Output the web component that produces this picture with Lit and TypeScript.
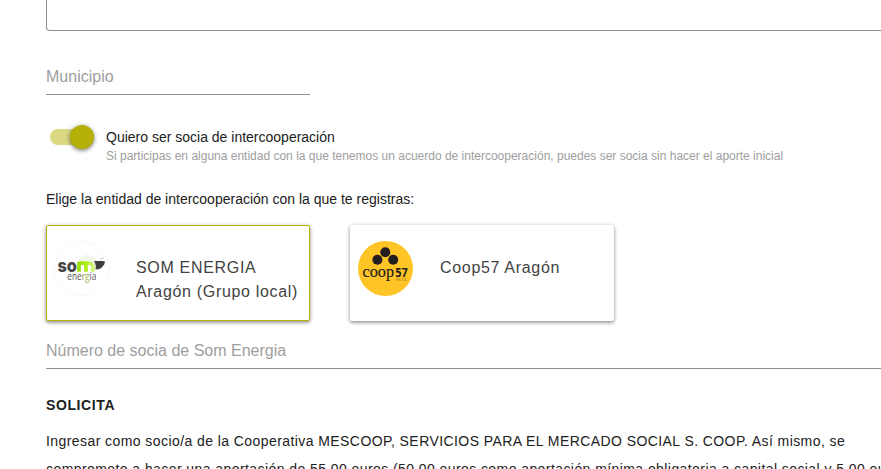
import { LitElement, html, css, svg } from "lit";
import { customElement, property } from "lit/decorators.js";

const somLogo = svg`
  <svg viewBox="0 0 55 55" width="55" height="55">
    <circle cx="27.5" cy="27.5" r="27" fill="#fff" stroke="#f8f8f8" stroke-width="1"/>
    <defs>
      <linearGradient id="lime" gradientUnits="userSpaceOnUse" x1="23" y1="0" x2="42" y2="0">
        <stop offset="0" stop-color="#96dc00"/><stop offset=".5" stop-color="#b0ee20"/><stop offset="1" stop-color="#dcf79a"/>
      </linearGradient>
    </defs>
    <text class="som" x="3.5" y="30.6" textLength="19.5" lengthAdjust="spacingAndGlyphs" fill="#454545">so</text>
    <path d="M25 30.800v-10M25.500 22.200h10q3.500 0 3.500 3v5.600M32 22v8.800" fill="none" stroke="url(#lime)" stroke-width="3.800"/>
    <path d="M24 20c3-5.500 10-8 15-4.500 2.500 1.500 3.500 3 4 5l-2 5c-2-4-5-5.500-9-5.500z" fill="#eff2e4" opacity=".85"/>
    <path d="M40 20h6c3 0 5 .2 5 1.200s-1 1.500-1.500 1.500c1.300.3 1 1.600-.3 1.900-1 2.700-3.800 4-7.700 4q1-5-1.500-8.600z" fill="#3d3d3d"/>
    <path d="M46 19.200c.5-3 2.500-.5 4-3" fill="none" stroke="#aaa" stroke-width=".7"/>
    <text class="energia" x="13.300" y="38.500" textLength="29" lengthAdjust="spacingAndGlyphs" fill="#555">ene<tspan fill="#8a9a50">r</tspan><tspan fill="#9bb84a">g</tspan>ia</text>
  </svg>`;

const coopLogo = svg`
  <svg viewBox="0 0 55 55" width="55" height="55">
    <circle cx="27.500" cy="27.500" r="27.500" fill="#ffc425"/>
    <g fill="#231f20">
      <circle cx="27.300" cy="11.300" r="5"/>
      <circle cx="19.400" cy="18.700" r="5"/>
      <circle cx="35.200" cy="18.700" r="5"/>
      <text class="coop" x="4.500" y="36" textLength="31.500" lengthAdjust="spacingAndGlyphs">coop</text>
      <text class="num" x="37.200" y="36" textLength="12.500" lengthAdjust="spacingAndGlyphs">57</text>
    </g>
    <text class="sccl" x="38" y="39.800" textLength="11" fill="#8b6d22">SCCL</text>
  </svg>`;

@customElement("entity-card")
class EntityCard extends LitElement {
  @property() logo = "";
  @property({ type: Boolean, reflect: true }) selected = false;

  static styles = css`
    :host {
      display: flex;
      box-sizing: border-box;
      width: 264px;
      height: 96px;
      padding: 15px 7px;
      border: 1px solid #fff;
      border-radius: 2px;
      background: #fff;
      box-shadow: 0 1px 5px rgba(0, 0, 0, 0.3), 0 2px 3px rgba(0, 0, 0, 0.2);
    }
    :host([selected]) { border-color: #b5b007; }
    .logo { width: 55px; height: 55px; flex: none; }
    .logo svg { display: block; }
    .label {
      margin: 15px 0 0 27px;
      font-size: 16px;
      line-height: 24px;
      letter-spacing: 0.68px;
      color: #424242;
    }
    .som { font: 800 18.500px Inter, "Liberation Sans", sans-serif; }
    .energia { font: 500 11px "Open Sans", sans-serif; }
    .coop { font: 17px "Liberation Serif", serif; stroke: #231f20; stroke-width: 0.2px; }
    .num { font: bold 11.500px "Noto Sans", sans-serif; }
    .sccl { font: bold 3.500px "Liberation Serif", serif; }
  `;

  render() {
    return html`
      <div class="logo">${this.logo === "som" ? somLogo : coopLogo}</div>
      <div class="label"><slot></slot></div>
    `;
  }
}

@customElement("app-root")
class AppRoot extends LitElement {
  static styles = css`
    :host {
      display: block;
      box-sizing: border-box;
      height: 469px;
      padding-left: 46px;
      overflow: hidden;
      background: #fff;
      font-family: "Liberation Sans", Arial, sans-serif;
      color: #212121;
      white-space: nowrap;
    }
    .area {
      box-sizing: border-box;
      width: 900px;
      height: 31px;
      border: 1px solid #8f8f8f;
      border-top: 0;
      border-radius: 0 0 4px 4px;
    }
    .field {
      box-sizing: border-box;
      border-bottom: 1px solid #8f8f8f;
      font-size: 16px;
      line-height: 20px;
      color: #9e9e9e;
    }
    .town { width: 264px; height: 28px; margin-top: 36px; }
    .member { width: 900px; height: 28px; margin-top: 20px; }
    .option { display: flex; height: 36px; margin-top: 33px; }
    .toggle {
      display: flex;
      flex: none;
      justify-content: flex-end;
      align-items: center;
      width: 44px;
      height: 16px;
      margin: 1px 12px 0 4px;
      border-radius: 8px;
      background: #dad883;
    }
    .thumb {
      width: 24px;
      height: 24px;
      border-radius: 50%;
      background: #b5b007;
      box-shadow: 0 1px 5px rgba(0, 0, 0, 0.4), 0 2px 3px rgba(0, 0, 0, 0.18);
    }
    .title { font-size: 14px; line-height: 18px; }
    .hint { font-size: 12px; line-height: 20px; color: #9e9e9e; }
    .prompt { margin-top: 25px; font-size: 14px; line-height: 20px; }
    .cards { display: flex; gap: 40px; margin-top: 16px; }
    .heading { margin-top: 26px; font-size: 14px; line-height: 20px; font-weight: bold; letter-spacing: 0.6px; }
    .terms { margin-top: 12px; font-size: 14px; line-height: 28px; letter-spacing: 0.425px; }
  `;

  render() {
    return html`
      <div class="area"></div>
      <div class="field town">Municipio</div>
      <div class="option">
        <div class="toggle"><div class="thumb"></div></div>
        <div>
          <div class="title">Quiero ser socia de intercooperación</div>
          <div class="hint">Si participas en alguna entidad con la que tenemos un acuerdo de intercooperación, puedes ser socia sin hacer el aporte inicial</div>
        </div>
      </div>
      <div class="prompt">Elige la entidad de intercooperación con la que te registras:</div>
      <div class="cards">
        <entity-card logo="som" selected>SOM ENERGIA<br />Aragón (Grupo local)</entity-card>
        <entity-card logo="coop">Coop57 Aragón</entity-card>
      </div>
      <div class="field member">Número de socia de Som Energia</div>
      <div class="heading">SOLICITA</div>
      <div class="terms">
        Ingresar como socio/a de la Cooperativa MESCOOP, SERVICIOS PARA EL MERCADO SOCIAL S. COOP. Así mismo, se<br />
        comprometo a hacer una aportación de 55,00 euros (50,00 euros como aportación mínima obligatoria a capital social y 5,00 euros
      </div>
    `;
  }
}
